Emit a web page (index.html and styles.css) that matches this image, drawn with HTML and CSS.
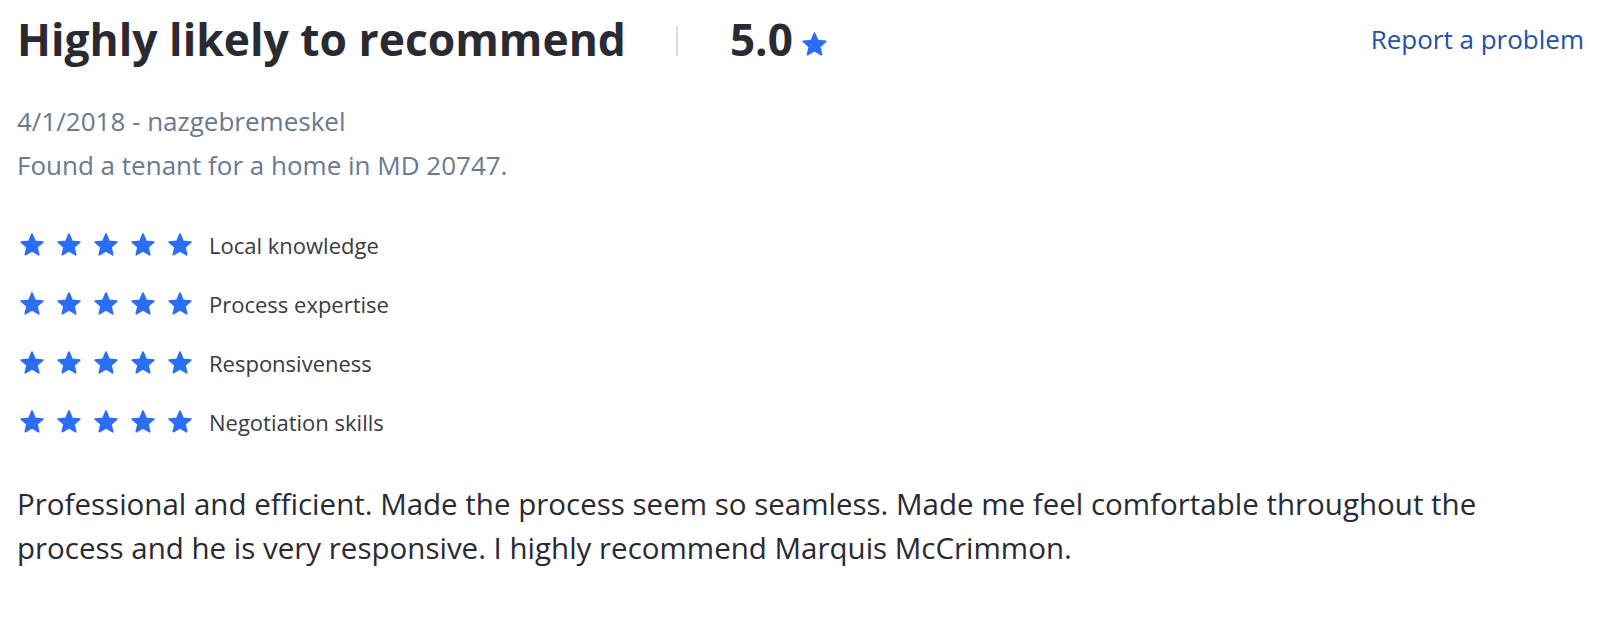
FILE: index.html
```html
<!DOCTYPE html>
<html lang="en">
<head>
  <meta charset="UTF-8">
  <meta name="viewport" content="width=device-width, initial-scale=1.0">
  <title>Review</title>
  <link rel="stylesheet" href="styles.css">
</head>
<body>
  <svg width="0" height="0" class="defs">
    <symbol id="star" viewBox="0 0 24 24">
      <path d="M12 17.27L18.18 21l-1.64-7.03L22 9.24l-7.19-.61L12 2 9.19 8.63 2 9.24l5.46 4.73L5.82 21z" stroke="currentColor" stroke-width="1.6" stroke-linejoin="round"/>
    </symbol>
  </svg>

  <div class="review">
    <!-- Header -->
    <div class="review-header">
      <h1 class="review-title">Highly likely to recommend</h1>
      <span class="divider"></span>
      <span class="score">5.0</span>
      <svg class="score-star"><use href="#star"/></svg>
      <a href="#" class="report-link">Report a problem</a>
    </div>

    <div class="meta">
      <div class="meta-line">4/1/2018 - nazgebremeskel</div>
      <div class="meta-line">Found a tenant for a home in MD 20747.</div>
    </div>

    <!-- Sub ratings -->
    <ul class="ratings">
      <li class="rating-row">
        <span class="stars">
          <svg class="star"><use href="#star"/></svg><svg class="star"><use href="#star"/></svg><svg class="star"><use href="#star"/></svg><svg class="star"><use href="#star"/></svg><svg class="star"><use href="#star"/></svg>
        </span>
        <span class="rating-label">Local knowledge</span>
      </li>
      <li class="rating-row">
        <span class="stars">
          <svg class="star"><use href="#star"/></svg><svg class="star"><use href="#star"/></svg><svg class="star"><use href="#star"/></svg><svg class="star"><use href="#star"/></svg><svg class="star"><use href="#star"/></svg>
        </span>
        <span class="rating-label">Process expertise</span>
      </li>
      <li class="rating-row">
        <span class="stars">
          <svg class="star"><use href="#star"/></svg><svg class="star"><use href="#star"/></svg><svg class="star"><use href="#star"/></svg><svg class="star"><use href="#star"/></svg><svg class="star"><use href="#star"/></svg>
        </span>
        <span class="rating-label">Responsiveness</span>
      </li>
      <li class="rating-row">
        <span class="stars">
          <svg class="star"><use href="#star"/></svg><svg class="star"><use href="#star"/></svg><svg class="star"><use href="#star"/></svg><svg class="star"><use href="#star"/></svg><svg class="star"><use href="#star"/></svg>
        </span>
        <span class="rating-label">Negotiation skills</span>
      </li>
    </ul>

    <p class="review-text">Professional and efficient. Made the process seem so seamless. Made me feel comfortable throughout the process and he is very responsive. I highly recommend Marquis McCrimmon.</p>
  </div>
</body>
</html>
```

FILE: styles.css
```css
body {
  margin: 0;
  font-family: "Open Sans", Arial, sans-serif;
  background: #fff;
  color: #2a2a33;
}

.defs {
  position: absolute;
}

.review {
  padding: 14px 38px 0 17px;
}

.review-header {
  display: flex;
  align-items: center;
  height: 50px;
}

.review-title {
  margin: 0;
  font-size: 44.4px;
  font-weight: 700;
  line-height: 50px;
  color: #2a2a33;
}

.divider {
  width: 2px;
  height: 30px;
  margin: 4px 52px 0 50px;
  background: #dcdcdc;
}

.score {
  font-size: 44px;
  font-weight: 700;
  line-height: 50px;
}

.score-star {
  width: 27px;
  height: 27px;
  margin: 11px 0 0 8px;
  color: #2a6ef5;
  fill: currentColor;
}

.report-link {
  margin-left: auto;
  font-size: 26px;
  color: #2351a5;
  text-decoration: none;
}

.meta {
  margin-top: 35px;
  font-size: 26px;
  line-height: 44px;
  color: #6a7890;
}

.ratings {
  list-style: none;
  margin: 28px 0 0;
  padding: 0;
}

.rating-row {
  display: flex;
  align-items: center;
  height: 59px;
}

.stars {
  display: flex;
  gap: 11px;
  width: 190px;
  margin-left: 2px;
}

.star {
  width: 26px;
  height: 26px;
  color: #2a6ef5;
  fill: currentColor;
}

.rating-label {
  font-size: 22px;
  color: #3a3a44;
}

.review-text {
  max-width: 1500px;
  margin: 31px 0 0;
  font-size: 29.5px;
  line-height: 44px;
  color: #2a2a33;
}
```
